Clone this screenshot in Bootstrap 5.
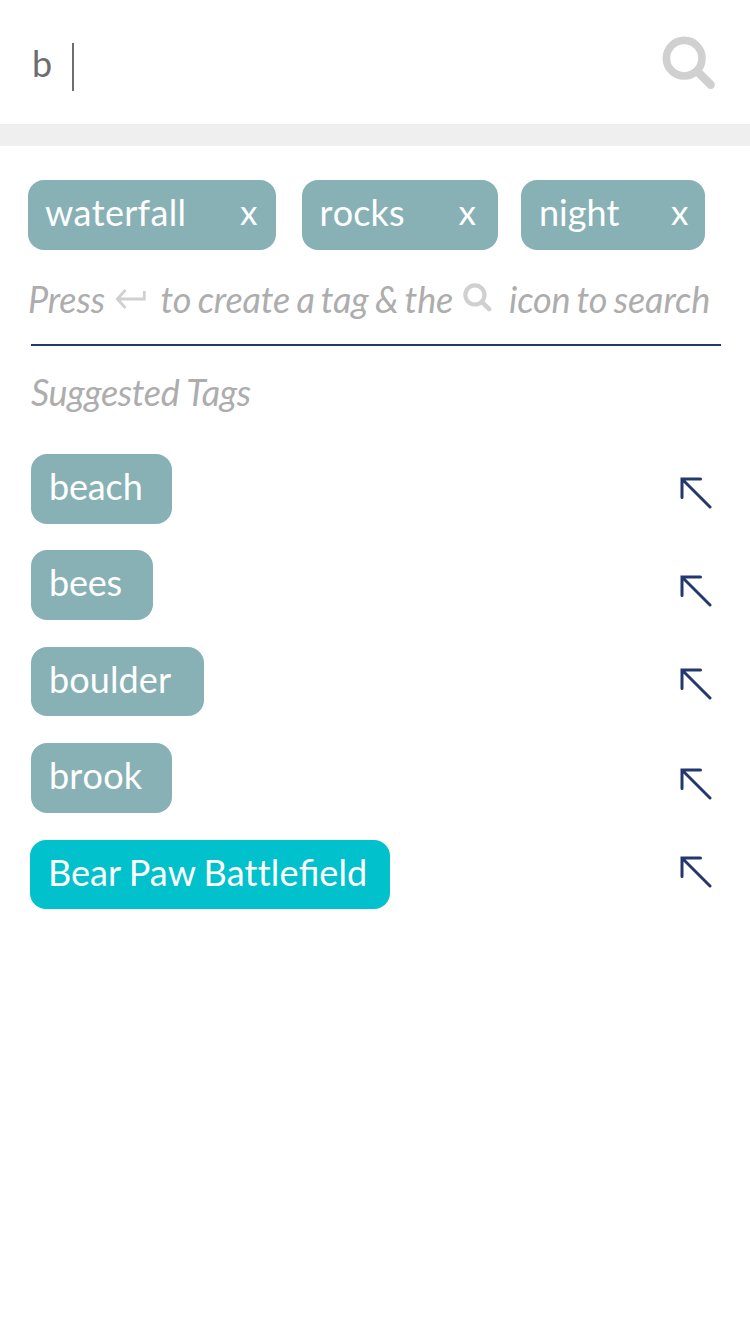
<!DOCTYPE html>
<html lang="en">
<head>
<meta charset="utf-8">
<meta name="viewport" content="width=device-width, initial-scale=1">
<title>Tag search</title>
<link href="https://cdn.jsdelivr.net/npm/bootstrap@5.3.0/dist/css/bootstrap.min.css" rel="stylesheet">
<style>
  body { font-family: Lato, "Liberation Sans", sans-serif; font-size: 36px; line-height: 43px; background: #fff; min-height: 1334px; }
  .search-bar { height: 146px; border-bottom: 22px solid #efefef; padding: 0 34px 0 32px; }
  .query { color: #6e6e6e; padding-top: 42px; }
  .caret { width: 2px; height: 48px; background: #6e6e6e; margin: 43px 0 0 20px; }
  .search-icon { width: 54px; height: 54px; margin-top: 36px; }
  .chip { height: 69.5px; border-radius: 16px; background: #87b1b5; color: #fff; padding: 11px 18px 0; white-space: nowrap; font-kerning: none; }
  .chip-place { background: #00c1cc; margin-left: -1px; font-kerning: normal; word-spacing: -1px; letter-spacing: .05px; font-feature-settings: "liga" 1; }
  .plain-letters { font-feature-settings: "liga" 0; letter-spacing: .2px; }
  .chip-x { margin-top: -1px; font-size: 35px; }
  .active-tags { padding: 34px 0 0 28px; }
  .hint { color: #adadad; font-style: italic; white-space: nowrap; }
  .hint-line { padding: 28px 0 0 28px; height: 94.5px; letter-spacing: -.12px; word-spacing: -2px; }
  .rule { height: 2px; margin: 0 29px 0 31px; background: #22386f; }
  .suggest-title { padding: 25px 0 0 31px; height: 108px; letter-spacing: -.37px; }
  .suggestions { padding: 0 38px 0 31px; }
  .suggestion { height: 96.4px; }
  .insert { width: 34px; height: 34px; fill: none; stroke: #22386f; stroke-width: 3; stroke-linecap: round; }
</style>
</head>
<body>
<header class="search-bar d-flex align-items-start">
  <span class="query">b</span>
  <span class="caret"></span>
  <svg class="search-icon ms-auto" viewBox="0 0 54 54" fill="none" stroke="#d0d0d0"><circle cx="22.2" cy="22.2" r="17.8" stroke-width="7.6"/><path d="M36 36l12.7 12.7" stroke-width="8.4" stroke-linecap="round"/></svg>
</header>

<main>
  <div class="active-tags d-flex">
    <div class="chip d-flex justify-content-between" style="width:248.4px;padding-left:17px"><span style="letter-spacing:.28px">waterfall</span><span class="chip-x" style="margin-right:1px">x</span></div>
    <div class="chip d-flex justify-content-between" style="width:196.4px;margin-left:25.6px;padding-left:17.5px"><span style="letter-spacing:.1px">rocks</span><span class="chip-x" style="margin-right:4.5px">x</span></div>
    <div class="chip d-flex justify-content-between" style="width:184.4px;margin-left:22.6px"><span>night</span><span class="chip-x" style="margin-right:-1px">x</span></div>
  </div>

  <div class="hint hint-line d-flex align-items-start">
    <span>Press</span>
    <svg width="32" height="22" viewBox="0 0 32 22" style="margin:10px 0 0 10px" fill="none" stroke="#d0d0d0" stroke-width="2.8"><path d="M10.5 2L2.3 11l8.2 9M2.3 11H29.3V3"/></svg>
    <span style="margin-left:13.5px">to create a tag &amp; the</span>
    <svg width="29" height="29" viewBox="0 0 54 54" style="margin:5px 0 0 10.3px" fill="none" stroke="#d0d0d0"><circle cx="22.2" cy="22.2" r="17.8" stroke-width="7.8"/><path d="M36 36l12.7 12.7" stroke-width="8.4" stroke-linecap="round"/></svg>
    <span style="margin-left:16.5px">icon to search</span>
  </div>

  <div class="rule"></div>
  <div class="hint suggest-title">Suggested Tags</div>

  <div class="suggestions">
    <div class="suggestion d-flex align-items-start justify-content-between">
      <div class="chip" style="width:141px;letter-spacing:-.15px">beach</div>
      <svg class="insert" style="margin-top:22px" viewBox="0 0 34 34"><path d="M22.5 3H4v18.500M4 3l28 28"/></svg>
    </div>
    <div class="suggestion d-flex align-items-start justify-content-between">
      <div class="chip" style="width:122px;letter-spacing:-.2px">bees</div>
      <svg class="insert" style="margin-top:23.5px" viewBox="0 0 34 34"><path d="M22.5 3H4v18.500M4 3l28 28"/></svg>
    </div>
    <div class="suggestion d-flex align-items-start justify-content-between">
      <div class="chip" style="width:173px;letter-spacing:.1px">boulder</div>
      <svg class="insert" style="margin-top:20.5px" viewBox="0 0 34 34"><path d="M22.5 3H4v18.500M4 3l28 28"/></svg>
    </div>
    <div class="suggestion d-flex align-items-start justify-content-between">
      <div class="chip" style="width:141px;letter-spacing:.15px">brook</div>
      <svg class="insert" style="margin-top:24px" viewBox="0 0 34 34"><path d="M22.5 3H4v18.500M4 3l28 28"/></svg>
    </div>
    <div class="suggestion d-flex align-items-start justify-content-between">
      <div class="chip chip-place" style="width:360px">Bear Paw <span class="plain-letters">Battle</span>field</div>
      <svg class="insert" style="margin-top:15.5px" viewBox="0 0 34 34"><path d="M22.5 3H4v18.500M4 3l28 28"/></svg>
    </div>
  </div>
</main>
<script src="https://cdn.jsdelivr.net/npm/bootstrap@5.3.0/dist/js/bootstrap.bundle.min.js"></script>
</body>
</html>
